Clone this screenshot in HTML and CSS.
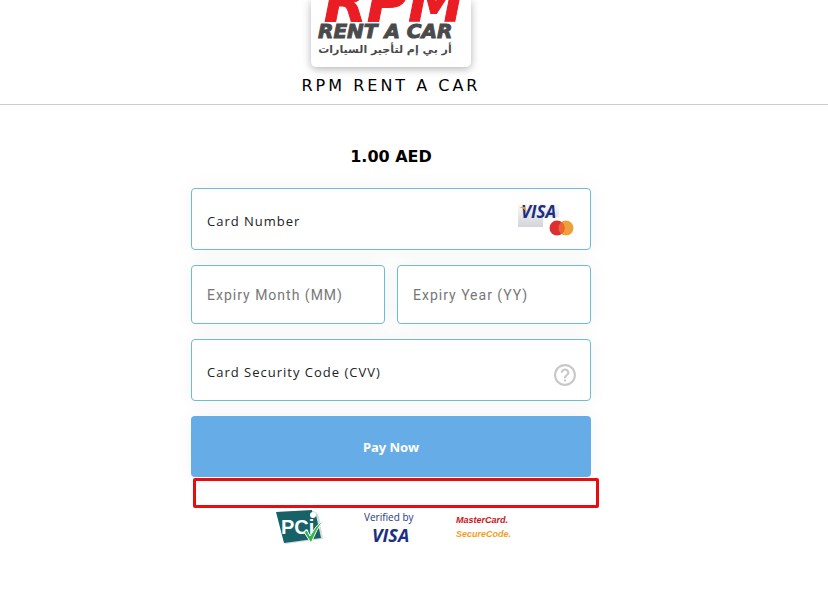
FILE: index.html
```html
<!DOCTYPE html>
<html lang="en">
<head>
<meta charset="utf-8">
<meta name="viewport" content="width=device-width, initial-scale=1">
<title>RPM RENT A CAR</title>
<link rel="stylesheet" href="styles.css">
</head>
<body>
<header class="header">
  <div class="brand-card">
    <svg class="brand-logo" viewBox="0 0 160 67" role="img" aria-label="RPM Rent a Car">
      <text class="brand-rpm" x="13" y="21">RPM</text>
      <text class="brand-rent" x="7" y="38">RENT A CAR</text>
      <text class="brand-arabic" x="74" y="53" direction="rtl">أر بي إم لتأجير السيارات</text>
    </svg>
  </div>
  <h1 class="merchant">RPM RENT A CAR</h1>
</header>
<main class="main">
  <form class="form">
    <p class="amount">1.00 AED</p>
    <div class="field field-tall">
      <input class="input input-small" type="text" inputmode="numeric" placeholder="Card Number" aria-label="Card Number">
      <svg class="cards" viewBox="0 0 58 36" role="img" aria-label="Visa and Mastercard">
        <defs>
          <linearGradient id="plate" x1="0" y1="0" x2="0" y2="1">
            <stop offset="0" stop-color="#fbfbfb"/>
            <stop offset="1" stop-color="#d3d4d8"/>
          </linearGradient>
        </defs>
        <path d="M1 1H42V14H26V24H1Z" fill="url(#plate)"/>
        <text class="visa-text" x="4" y="15">VISA</text>
        <path d="M2 4h6l2 5q-2-3-8-5z" fill="#f0a020"/>
        <circle cx="49" cy="25" r="7.500" fill="#eda13b"/>
        <circle cx="40" cy="25" r="7.500" fill="#dc2f31"/>
        <path d="M44.500 19a7.500 7.500 0 0 1 0 12a7.500 7.500 0 0 1 0-12z" fill="#ef6435"/>
      </svg>
    </div>
    <div class="row">
      <div class="field field-short">
        <input class="input" type="text" inputmode="numeric" placeholder="Expiry Month (MM)" aria-label="Expiry Month (MM)">
      </div>
      <div class="field field-short">
        <input class="input" type="text" inputmode="numeric" placeholder="Expiry Year (YY)" aria-label="Expiry Year (YY)">
      </div>
    </div>
    <div class="field field-tall">
      <input class="input input-small" type="text" inputmode="numeric" placeholder="Card Security Code (CVV)" aria-label="Card Security Code (CVV)">
      <button class="help" type="button" aria-label="Help">
        <svg viewBox="2 2 20 20" width="22" height="22" fill="#c8c8c8"><path d="M11 18h2v-2h-2v2zm1-16C6.480 2 2 6.480 2 12s4.480 10 10 10 10-4.480 10-10S17.520 2 12 2zm0 18c-4.410 0-8-3.590-8-8s3.590-8 8-8 8 3.590 8 8-3.590 8-8 8zm0-14c-2.210 0-4 1.790-4 4h2c0-1.100.9-2 2-2s2 .9 2 2c0 2-3 1.750-3 5h2c0-2.250 3-2.500 3-5 0-2.210-1.790-4-4-4z"/></svg>
      </button>
    </div>
    <button class="pay" type="submit">Pay Now</button>
    <div class="notice"></div>
    <div class="badges">
      <svg width="49" height="34" viewBox="0 0 49 34" role="img" aria-label="PCI">
        <path d="M1 2L37 1Q42 2 43 7L47 29L9 34Z" fill="#d5dcdc"/>
        <path d="M0 2L36 0Q36 5 40 5L45 28L8 33Z" fill="#176269"/>
        <text class="pci-text" x="5" y="24">PCi</text>
        <circle cx="37" cy="5" r="3" fill="#fff"/>
        <path d="M28 22l3-2 3 6q5-10 14-17-8 11-13 24z" fill="#35b44a" stroke="#fff" stroke-width="1"/>
      </svg>
      <svg width="52" height="34" viewBox="0 0 52 34" role="img" aria-label="Verified by Visa">
        <text class="verified-text" x="0" y="11">Verified by</text>
        <text class="verified-visa" x="8" y="32">VISA</text>
      </svg>
      <svg width="58" height="34" viewBox="0 0 58 34" role="img" aria-label="MasterCard SecureCode">
        <text class="master-text" x="1" y="13">MasterCard.</text>
        <text class="secure-text" x="1" y="27">SecureCode.</text>
      </svg>
    </div>
  </form>
</main>
</body>
</html>
```
FILE: styles.css
```css
* {
  box-sizing: border-box;
}

body {
  margin: 0;
  background: #fff;
  color: #000;
  font-family: "DejaVu Sans", sans-serif;
}

.header {
  display: flex;
  flex-direction: column;
  align-items: center;
  padding-right: 46px;
  border-bottom: 1px solid #ccc;
}

.brand-card {
  width: 160px;
  border-radius: 0 0 5px 5px;
  background: #fff;
  box-shadow: 0 2px 8px rgba(0, 0, 0, 0.3);
}

.brand-logo {
  display: block;
  width: 100%;
}

.brand-rpm {
  font: italic bold 56px "DejaVu Sans", sans-serif;
  fill: #ea1c24;
  stroke: #ea1c24;
  stroke-width: 1px;
}

.brand-rent {
  font: italic bold 20px "DejaVu Sans", sans-serif;
  fill: #4a4a4c;
  stroke: #4a4a4c;
  stroke-width: 1px;
}

.brand-arabic {
  font: bold 11px "DejaVu Sans", sans-serif;
  fill: #4a4a4c;
  text-anchor: middle;
}

.merchant {
  margin: 0;
  padding: 8px 0 7px;
  font: 16px/22px "DejaVu Sans", sans-serif;
  letter-spacing: 3px;
}

.main {
  padding: 41px 46px 40px 0;
}

.form {
  width: 100%;
  max-width: 400px;
  margin: 0 auto;
}

.amount {
  margin: 0 0 20px;
  font-size: 16px;
  font-weight: bold;
  line-height: 22px;
  text-align: center;
}

.field {
  display: flex;
  align-items: center;
  margin-bottom: 15px;
  padding: 0 15px;
  border: 1px solid #6bbdcf;
  border-radius: 4px;
  background: #fff;
  box-shadow: 0 0 20px rgba(0, 0, 0, 0.05);
}

.field-tall {
  height: 62px;
  padding-top: 3px;
}

.field-short {
  flex: 1;
  min-width: 0;
  height: 59px;
}

.row {
  display: flex;
  gap: 12px;
}

.input {
  flex: 1;
  min-width: 0;
  height: 32px;
  padding: 0;
  border: 0;
  outline: 0;
  background: transparent;
  color: #222;
  font: 14px Roboto, sans-serif;
  letter-spacing: 1px;
}

.input::placeholder {
  color: #777;
  opacity: 1;
}

.input-small {
  font: 13px "Open Sans", sans-serif;
}

.input-small::placeholder {
  color: #222;
}

.cards {
  width: 58px;
  height: 36px;
}

.visa-text {
  font: italic bold 17px "Open Sans", sans-serif;
  fill: #1c2f83;
}

.help {
  display: flex;
  margin: 6px -1px 0 0;
  padding: 0;
  border: 0;
  background: none;
}

.pay {
  display: block;
  width: 100%;
  height: 61px;
  border: 0;
  border-radius: 4px;
  background: #66ade8;
  box-shadow: 0 0 20px rgba(0, 0, 0, 0.05);
  color: #fff;
  font: bold 13px "Noto Sans", sans-serif;
}

.notice {
  height: 30px;
  margin: 1px -8px 2px 2px;
  border: 3px solid #e60c10;
  border-radius: 2px;
}

.badges {
  display: flex;
  justify-content: center;
  gap: 39px;
  padding-left: 6px;
}

.pci-text {
  font: bold 20px "Liberation Sans", sans-serif;
  fill: #fff;
}

.verified-text {
  font: 10px "Open Sans", sans-serif;
  fill: #2a3880;
}

.verified-visa {
  font: italic bold 18px "Open Sans", sans-serif;
  fill: #1c2f83;
}

.master-text {
  font: italic bold 9px "Liberation Sans", sans-serif;
  fill: #c8141c;
}

.secure-text {
  font: italic bold 9px "Liberation Sans", sans-serif;
  fill: #f2a01e;
}
```
